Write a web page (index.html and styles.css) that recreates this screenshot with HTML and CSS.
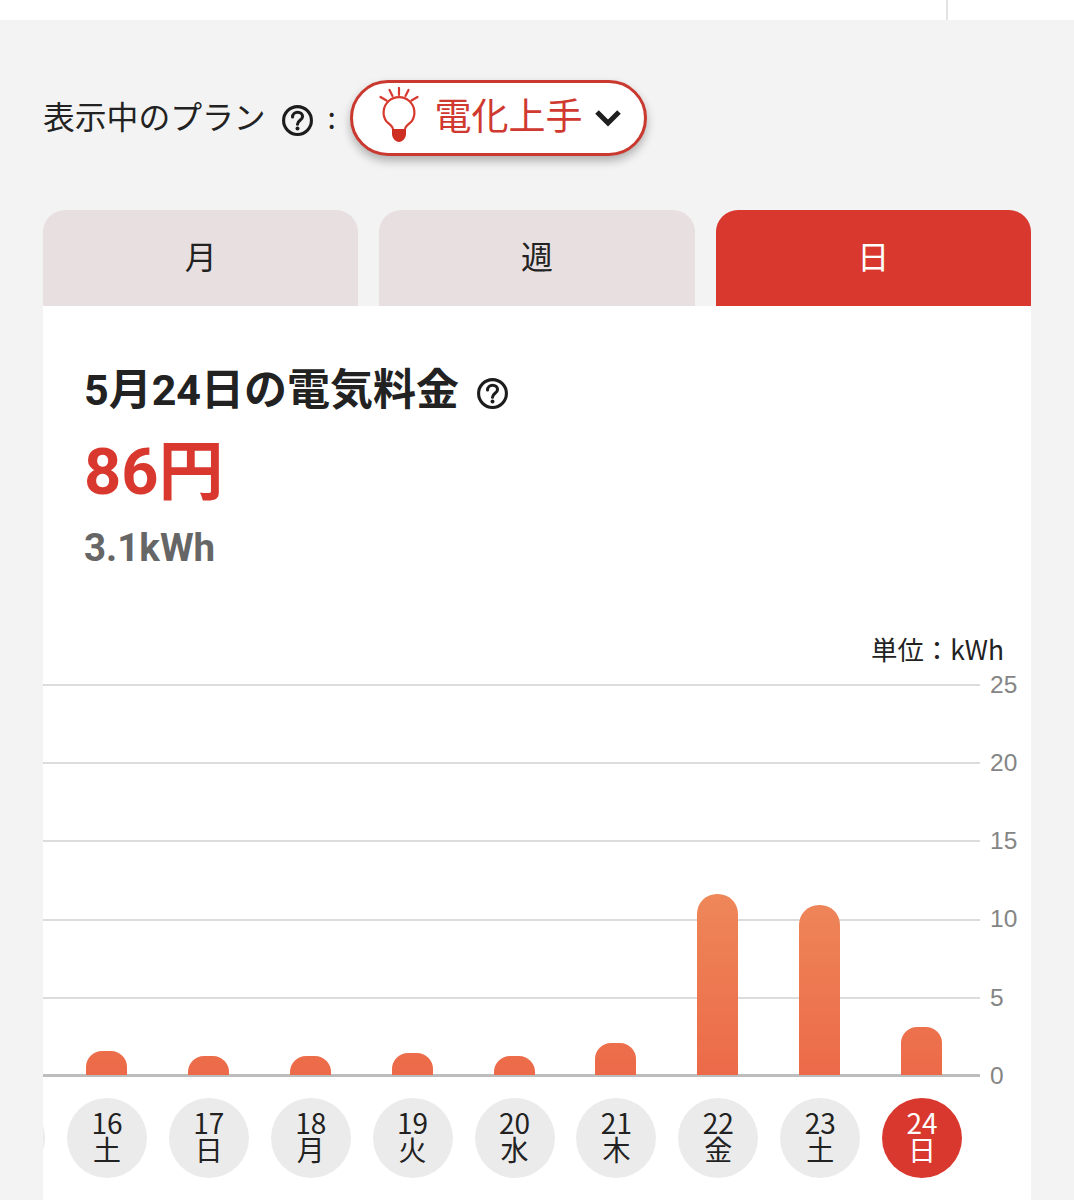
FILE: index.html
```html
<!DOCTYPE html>
<html lang="ja">
<head>
<meta charset="utf-8">
<title>電気料金</title>
<link rel="stylesheet" href="styles.css">
</head>
<body>
<header class="topbar"><div class="topbar-cell"></div></header>
<main class="main">
  <div class="plan-row">
    <span class="plan-label">表示中のプラン</span>
    <svg class="help help-plan" viewBox="0 0 32 32"><circle cx="16" cy="16" r="13.5"/><path d="M11.2 12.6c0-2.8 2.2-4.6 4.9-4.6s4.8 1.7 4.8 4.2c0 3.6-4.9 3.6-4.9 7.4"/><circle class="dot" cx="16" cy="23.8" r="1.9"/></svg>
    <span class="plan-colon">:</span>
    <button class="plan-pill">
      <svg class="bulb" viewBox="0 0 40 56">
        <path class="ray" d="M20 1v7M10.500 3l3 6M29.500 3l-3 6M1.500 10l6 3.500M38.500 10l-6 3.500"/>
        <path class="glass" d="M14 42c-.5-3-3.500-5-6.500-7.500A15.400 15.400 0 1 1 32.500 34.500c-3 2.500-6 4.500-6.500 7.500"/>
        <path class="cap" d="M13 42h14v5c0 4-3.500 8-7 8s-7-4-7-8z"/>
      </svg>
      <span class="plan-name">電化上手</span>
      <svg class="chev" viewBox="0 0 28 18"><path d="M3 3l11 11L25 3"/></svg>
    </button>
  </div>

  <nav class="tabs">
    <div class="tab">月</div>
    <div class="tab">週</div>
    <div class="tab tab-active">日</div>
  </nav>

  <section class="card">
    <div class="summary">
      <h1 class="title">5月24日の電気料金
        <svg class="help help-title" viewBox="0 0 32 32"><circle cx="16" cy="16" r="13.500"/><path d="M11.200 12.600c0-2.800 2.200-4.600 4.900-4.600s4.800 1.700 4.800 4.200c0 3.600-4.900 3.600-4.900 7.400"/><circle class="dot" cx="16" cy="23.800" r="1.900"/></svg>
      </h1>
      <p class="price">86円</p>
      <p class="usage">3.1kWh</p>
    </div>
    <div class="unit">単位：kWh</div>
    <div class="chart">
      <div class="grid">
        <div class="grid-row"><i class="line"></i><span class="tick">25</span></div>
        <div class="grid-row"><i class="line"></i><span class="tick">20</span></div>
        <div class="grid-row"><i class="line"></i><span class="tick">15</span></div>
        <div class="grid-row"><i class="line"></i><span class="tick">10</span></div>
        <div class="grid-row"><i class="line"></i><span class="tick">5</span></div>
        <div class="grid-row"><i class="line line-base"></i><span class="tick">0</span></div>
      </div>
      <div class="bars">
        <div class="bar-col"></div>
        <div class="bar-col"><div class="bar" style="height:24px"></div></div>
        <div class="bar-col"><div class="bar" style="height:19px"></div></div>
        <div class="bar-col"><div class="bar" style="height:19px"></div></div>
        <div class="bar-col"><div class="bar" style="height:22px"></div></div>
        <div class="bar-col"><div class="bar" style="height:19px"></div></div>
        <div class="bar-col"><div class="bar" style="height:32px"></div></div>
        <div class="bar-col"><div class="bar bar-tall" style="height:181px"></div></div>
        <div class="bar-col"><div class="bar bar-tall" style="height:170px"></div></div>
        <div class="bar-col"><div class="bar" style="height:48px"></div></div>
      </div>
    </div>
    <div class="days">
      <div class="day-strip">
        <div class="day-col"><div class="day"></div></div>
        <div class="day-col"><div class="day">16<br>土</div></div>
        <div class="day-col"><div class="day">17<br>日</div></div>
        <div class="day-col"><div class="day">18<br>月</div></div>
        <div class="day-col"><div class="day">19<br>火</div></div>
        <div class="day-col"><div class="day">20<br>水</div></div>
        <div class="day-col"><div class="day">21<br>木</div></div>
        <div class="day-col"><div class="day">22<br>金</div></div>
        <div class="day-col"><div class="day">23<br>土</div></div>
        <div class="day-col"><div class="day day-active">24<br>日</div></div>
      </div>
    </div>
  </section>
</main>
</body>
</html>
```
FILE: styles.css
```css
* { box-sizing: border-box; }
html, body { margin: 0; padding: 0; }
body {
  height: 1200px;
  overflow: hidden;
  background: #f3f3f3;
  color: #222;
  font-family: "Noto Sans CJK JP", "Noto Sans", sans-serif;
}
.topbar {
  height: 20px;
  background: #fff;
  display: flex;
  justify-content: flex-end;
}
.topbar-cell {
  width: 128px;
  border-left: 2px solid #e4e4e4;
}
.main { padding: 0 43px; }

.plan-row {
  height: 76px;
  margin-top: 60px;
  display: flex;
  align-items: center;
}
.plan-label {
  font-size: 31.800px;
  font-weight: 400;
  line-height: 1;
  white-space: nowrap;
  padding-bottom: 4px;
}
.help { fill: none; stroke: #1c1c1c; stroke-width: 3; stroke-linecap: round; }
.help .dot { fill: #1c1c1c; stroke: none; }
.help-plan { width: 33px; height: 33px; margin: 5px 0 0 15px; }
.plan-colon {
  font-size: 30px;
  line-height: 1;
  margin: 0 0 0 14px;
  width: 22px;
  padding-bottom: 4px;
}
.plan-pill {
  width: 297px;
  height: 76px;
  display: flex;
  align-items: center;
  padding: 0 0 0 26px;
  border: 3px solid #c9392f;
  border-radius: 38px;
  background: #fff;
  box-shadow: 0 5px 10px rgba(0, 0, 0, .28);
  font: inherit;
}
.bulb { width: 40px; height: 56px; flex: none; margin-bottom: 7px; }
.bulb .ray { fill: none; stroke: #d8392e; stroke-width: 2.200; stroke-linecap: round; }
.bulb .glass { fill: none; stroke: #d8392e; stroke-width: 2.200; }
.bulb .cap { fill: #cf2e23; }
.plan-name {
  margin-left: 16px;
  font-size: 37px;
  font-weight: 400;
  line-height: 1;
  color: #d0392f;
  white-space: nowrap;
  padding-bottom: 8px;
}
.chev {
  width: 28px;
  height: 18px;
  margin-left: 11px;
  fill: none;
  stroke: #1f1f1f;
  stroke-width: 5;
}

.tabs {
  display: flex;
  gap: 21px;
  margin-top: 54px;
}
.tab {
  flex: 1;
  height: 96px;
  border-radius: 22px 22px 0 0;
  background: #e8e0e0;
  display: flex;
  align-items: center;
  justify-content: center;
  font-size: 32px;
  font-weight: 400;
  padding-bottom: 7px;
}
.tab-active { background: #d9382e; color: #fff; }

.card {
  background: #fff;
  height: 900px;
}
.summary { padding: 54px 41px 0; }
.title {
  margin: 0;
  display: flex;
  align-items: center;
  font-family: Roboto, "Noto Sans CJK JP", sans-serif;
  font-size: 43px;
  font-weight: 700;
  line-height: 60px;
  height: 60px;
  color: #222;
  white-space: nowrap;
}
.help-title { width: 33px; height: 33px; margin: 6px 0 0 17px; }
.price {
  margin: 7px 0 0;
  font-family: Roboto, "Noto Sans CJK JP", sans-serif;
  font-size: 65px;
  font-weight: 700;
  line-height: 90px;
  color: #d9382e;
}
.usage {
  margin: 9px 0 0;
  font-family: Roboto, "Noto Sans", sans-serif;
  font-size: 38.500px;
  font-weight: 700;
  line-height: 44px;
  color: #666;
}
.unit {
  margin-top: 59px;
  padding-right: 27px;
  text-align: right;
  font-size: 26.400px;
  font-weight: 400;
  line-height: 40px;
  height: 40px;
  color: #222;
}
.chart {
  position: relative;
  margin-top: 15px;
  height: 393px;
}
.grid {
  height: 100%;
  display: flex;
  flex-direction: column;
  justify-content: space-between;
}
.grid-row {
  height: 2px;
  display: flex;
  align-items: center;
}
.line {
  display: block;
  width: 937px;
  height: 2px;
  background: #dcdcdc;
}
.line-base { height: 3px; background: #bdbdbd; }
.tick {
  margin-left: 10px;
  font-family: "Liberation Sans", sans-serif;
  font-size: 24.500px;
  line-height: 1;
  color: #858585;
}
.bars {
  position: absolute;
  left: -89.400px;
  top: 0;
  bottom: 2px;
  display: flex;
  align-items: flex-end;
}
.bar-col {
  width: 101.900px;
  display: flex;
  justify-content: center;
}
.bar {
  width: 41px;
  border-radius: 16px 16px 0 0;
  background: linear-gradient(#ee8759, #ec6a49) bottom / 100% 182px no-repeat;
}
.bar-tall { border-radius: 20px 20px 0 0; }
.days {
  margin-top: 21px;
  overflow: hidden;
}
.day-strip {
  display: flex;
  margin-left: -88.900px;
}
.day-col {
  flex: none;
  width: 101.900px;
  display: flex;
  justify-content: center;
}
.day {
  width: 80px;
  height: 80px;
  flex: none;
  border-radius: 50%;
  background: #ebebeb;
  text-align: center;
  font-size: 28px;
  font-weight: 400;
  line-height: 27px;
  padding-top: 11px;
  color: #222;
}
.day-active { background: #d9382e; color: #fff; }
```
